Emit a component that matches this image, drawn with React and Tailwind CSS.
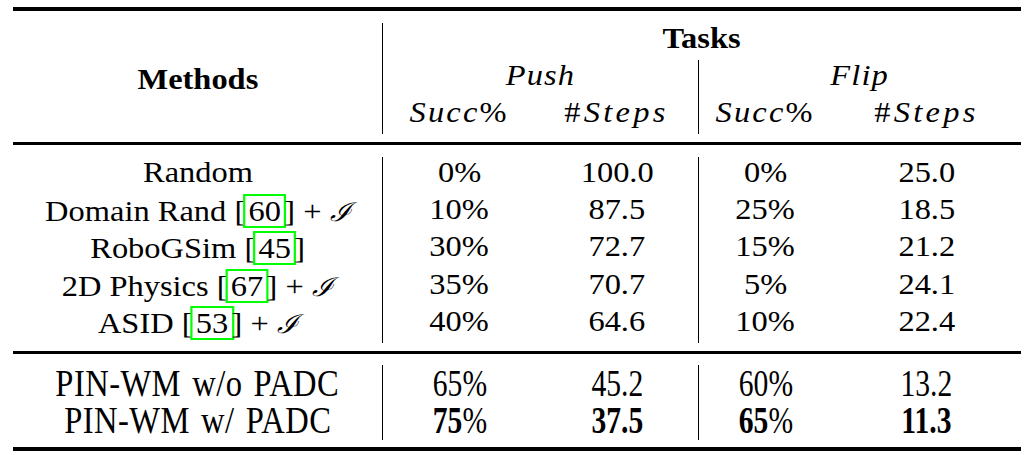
const cols = "grid grid-cols-[369px_154px_162px_134px_189px]";

const scales = {
  wide: "scale-x-[1.1]",
  narrow: "scale-x-[0.8]",
  name: "scale-x-[0.88]",
};

function T({ children, className = "", s = "wide" }) {
  return (
    <span className={"inline-block whitespace-nowrap " + scales[s] + " " + className}>
      {children}
    </span>
  );
}

function Cite({ n }) {
  return (
    <span className="inline-block border-2 border-[#00ff00] px-[3px] -mx-[2px] leading-[30px]">
      {n}
    </span>
  );
}

const Cal = () => <span className="italic text-[26px]">ℐ</span>;

const rows = [
  { m: <>Random</>, v: ["0%", "100.0", "0%", "25.0"] },
  { m: <>Domain Rand [<Cite n="60" />] + <Cal /></>, v: ["10%", "87.5", "25%", "18.5"] },
  { m: <>RoboGSim [<Cite n="45" />]</>, v: ["30%", "72.7", "15%", "21.2"] },
  { m: <>2D Physics [<Cite n="67" />] + <Cal /></>, v: ["35%", "70.7", "5%", "24.1"] },
  { m: <>ASID [<Cite n="53" />] + <Cal /></>, v: ["40%", "64.6", "10%", "22.4"] },
];

function Pct({ n, bold }) {
  return (
    <>
      <span className={bold ? "font-bold" : ""}>{n}</span>%
    </>
  );
}

export default function App() {
  return (
    <div className="bg-white w-[1033px] h-[455px] pt-[7px] pl-[13px] text-black font-['Liberation_Serif'] text-[29.5px] leading-[30px]">
      <div className="w-[1008px]">
        <div className="h-[4px] bg-black" />

        <div className={cols + " grid-rows-[37px_37px_37px] mt-[12px]"}>
          <div className="row-span-3 flex items-center justify-center font-bold">
            <T>Methods</T>
          </div>
          <div className="col-span-4 border-l border-black flex justify-center font-bold">
            <T>Tasks</T>
          </div>
          <div className="col-span-2 border-l border-black flex justify-center italic">
            <T className="tracking-[1px]">Push</T>
          </div>
          <div className="col-span-2 border-l border-black flex justify-center italic">
            <T className="tracking-[1px]">Flip</T>
          </div>
          <div className="border-l border-black flex justify-center italic">
            <T className="tracking-[2px]">Succ<span className="not-italic">%</span></T>
          </div>
          <div className="flex justify-center italic">
            <T className="tracking-[3px]"><span className="not-italic">#</span>Steps</T>
          </div>
          <div className="border-l border-black flex justify-center italic">
            <T className="tracking-[2px]">Succ<span className="not-italic">%</span></T>
          </div>
          <div className="flex justify-center italic">
            <T className="tracking-[3px]"><span className="not-italic">#</span>Steps</T>
          </div>
        </div>

        <div className="h-[3px] bg-black mt-[8px]" />

        <div className={cols + " mt-[12px]"}>
          {rows.map((r, i) => (
            <div key={i} className="contents">
              <div className="h-[37.2px] flex justify-center">
                <T>{r.m}</T>
              </div>
              <div className="border-l border-black flex justify-center">
                <T>{r.v[0]}</T>
              </div>
              <div className="flex justify-center">
                <T>{r.v[1]}</T>
              </div>
              <div className="border-l border-black flex justify-center">
                <T>{r.v[2]}</T>
              </div>
              <div className="flex justify-center">
                <T>{r.v[3]}</T>
              </div>
            </div>
          ))}
        </div>

        <div className="h-[3px] bg-black mt-[8px]" />

        <div className={cols + " mt-[11px] text-[37px] leading-[37.5px]"}>
          <div className="h-[37.5px] flex justify-center">
            <T s="name" className="tracking-[0.5px] [word-spacing:3px]">PIN-WM w/o PADC</T>
          </div>
          <div className="border-l border-black flex justify-center">
            <T s="narrow">65%</T>
          </div>
          <div className="flex justify-center">
            <T s="narrow">45.2</T>
          </div>
          <div className="border-l border-black flex justify-center">
            <T s="narrow">60%</T>
          </div>
          <div className="flex justify-center">
            <T s="narrow">13.2</T>
          </div>

          <div className="h-[37.5px] flex justify-center">
            <T s="name" className="tracking-[0.5px] [word-spacing:3px]">PIN-WM w/ PADC</T>
          </div>
          <div className="border-l border-black flex justify-center">
            <T s="narrow"><Pct n="75" bold /></T>
          </div>
          <div className="flex justify-center">
            <T s="narrow" className="font-bold">37.5</T>
          </div>
          <div className="border-l border-black flex justify-center">
            <T s="narrow"><Pct n="65" bold /></T>
          </div>
          <div className="flex justify-center">
            <T s="narrow" className="font-bold">11.3</T>
          </div>
        </div>

        <div className="h-[4px] bg-black mt-[7px]" />
      </div>
    </div>
  );
}
